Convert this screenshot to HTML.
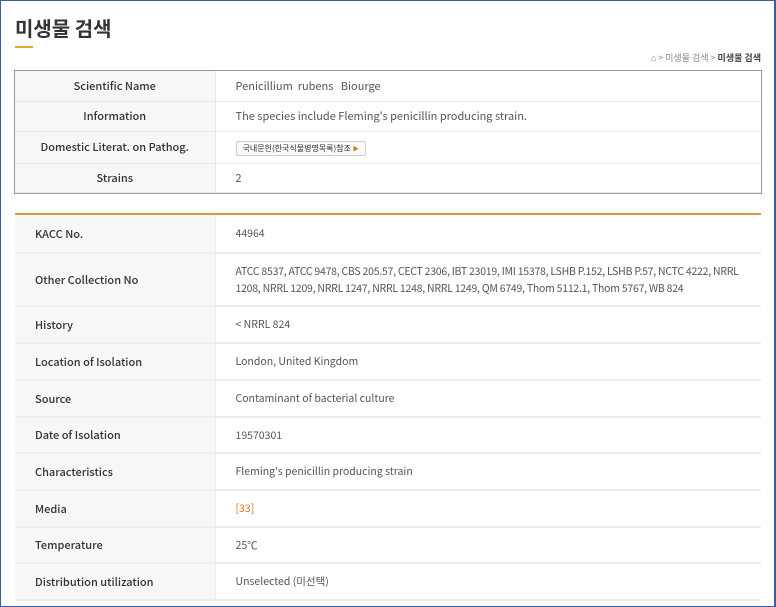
<!DOCTYPE html>
<html><head><meta charset="utf-8"><style>
*{margin:0;padding:0;box-sizing:border-box}
body{width:776px;height:607px;overflow:hidden;background:#fff;font-family:"Noto Sans CJK KR",sans-serif;color:#555;position:relative}
.frame{position:absolute;left:0;top:0;width:776px;height:607px;border:1.5px solid #3a5f9a;border-right-width:2px}
h1{position:absolute;left:15px;top:13px;font-size:20px;font-weight:bold;color:#333}
.ul{position:absolute;left:15px;top:46px;width:18px;height:2px;background:#d9aa2c}
.bc{position:absolute;right:15px;top:51px;font-size:9px;color:#888}
.bc b{color:#444}
table{position:absolute;left:15px;width:746px;border-collapse:collapse;font-size:11px}
td{border-bottom:1px solid #e8e8e8}
.t1{top:71px;outline:1.5px solid #999}
.t1 td.l{width:200px;background:#f7f7f7;text-align:center;font-weight:500;color:#333;border-right:1px solid #e8e8e8}
.t1 td.v{padding-left:20px}
.t2{top:213px;border-top:2px solid #d99a3c}
.t2 td{border-bottom:2px solid #eee}
.t2 td.l{width:200px;background:#f7f7f7;padding-left:20px;font-weight:500;color:#333;border-right:1px solid #eee}
.t2 td.v{padding-left:20px;line-height:17px;font-size:10.5px}
.nw{white-space:nowrap;letter-spacing:-0.25px}
.btn{display:inline-block;border:1px solid #ccc;border-radius:2px;font-size:8px;padding:1px 6px;color:#333;background:#fafafa}
.btn i{color:#d27a1c;font-style:normal;font-size:6px}
</style></head><body>
<h1>미생물 검색</h1><div class="ul"></div>
<div class="bc">&#8962; &gt; 미생물 검색 &gt; <b>미생물 검색</b></div>
<table class="t1">
<tr style="height:30px"><td class="l">Scientific Name</td><td class="v">Penicillium&nbsp; rubens&nbsp;&nbsp; Biourge</td></tr>
<tr style="height:30px"><td class="l">Information</td><td class="v">The species include Fleming's penicillin producing strain.</td></tr>
<tr style="height:32px"><td class="l">Domestic Literat. on Pathog.</td><td class="v"><span class="btn">국내문헌(한국식물병명목록)참조 <i>&#9654;</i></span></td></tr>
<tr style="height:29px"><td class="l">Strains</td><td class="v">2</td></tr>
</table>
<table class="t2">
<tr style="height:39px"><td class="l">KACC No.</td><td class="v">44964</td></tr>
<tr style="height:53px"><td class="l">Other Collection No</td><td class="v"><div class="nw">ATCC 8537, ATCC 9478, CBS 205.57, CECT 2306, IBT 23019, IMI 15378, LSHB P.152, LSHB P.57, NCTC 4222, NRRL</div><div class="nw">1208, NRRL 1209, NRRL 1247, NRRL 1248, NRRL 1249, QM 6749, Thom 5112.1, Thom 5767, WB 824</div></td></tr>
<tr style="height:37px"><td class="l">History</td><td class="v">&lt; NRRL 824</td></tr>
<tr style="height:37px"><td class="l">Location of Isolation</td><td class="v">London, United Kingdom</td></tr>
<tr style="height:37px"><td class="l">Source</td><td class="v">Contaminant of bacterial culture</td></tr>
<tr style="height:36px"><td class="l">Date of Isolation</td><td class="v">19570301</td></tr>
<tr style="height:37px"><td class="l">Characteristics</td><td class="v">Fleming's penicillin producing strain</td></tr>
<tr style="height:37px"><td class="l">Media</td><td class="v" style="color:#d27a1c">[33]</td></tr>
<tr style="height:36px"><td class="l">Temperature</td><td class="v">25℃</td></tr>
<tr style="height:37px"><td class="l">Distribution utilization</td><td class="v">Unselected (미선택)</td></tr>
</table>
<div class="frame"></div>
</body></html>
